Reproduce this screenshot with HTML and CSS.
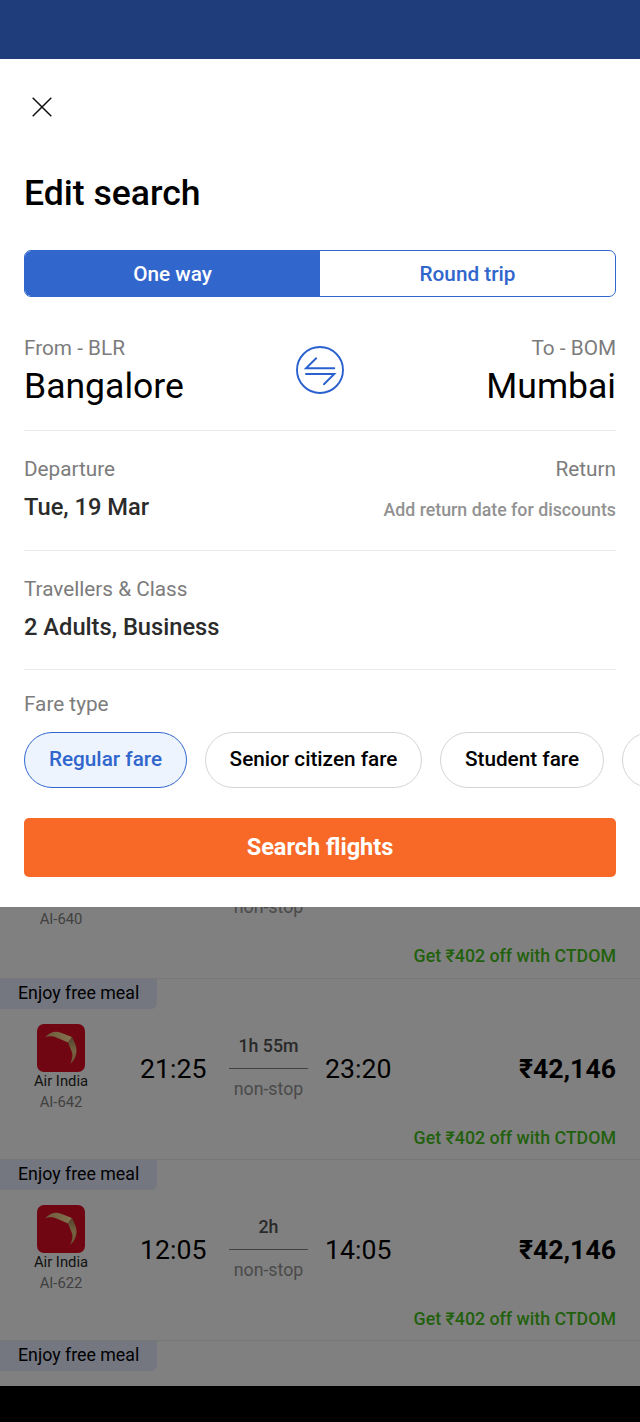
FILE: index.html
```
<!DOCTYPE html>
<html lang="en">
<head>
<meta charset="utf-8">
<title>Edit search</title>
<link rel="stylesheet" href="styles.css">
</head>
<body>
<svg class="defs" width="0" height="0" aria-hidden="true">
  <defs>
    <linearGradient id="tail" x1="0" y1="0" x2="0" y2="1"><stop offset="0" stop-color="#51422a"/><stop offset="0.5" stop-color="#756342"/><stop offset="1" stop-color="#6b5432"/></linearGradient>
    <linearGradient id="wing" x1="0" y1="0" x2="1" y2="0"><stop offset="0" stop-color="#6d5b3b"/><stop offset="1" stop-color="#847350"/></linearGradient>
    <symbol id="airline-logo" viewBox="0 0 48 48">
      <rect width="48" height="48" rx="7" fill="#710613"/>
      <path d="M8 13.500C13 8.300 18 6.500 24 8.800L35 13L31 18.500L20 13.800C15 11.500 11 12 8 13.500Z" fill="url(#wing)"/>
      <path d="M35 13C37.500 18 40 23 39.500 28C39 33 36.500 37 33.300 40C35.500 34 36 31 34.500 27L31 18.500Z" fill="url(#tail)"/>
    </symbol>
  </defs>
</svg>
<div class="status"></div>
<main class="sheet">
  <button class="close" aria-label="Close"><svg width="20" height="20" viewBox="0 0 20 20"><path d="M.7.7l18.600 18.600M19.300.7L.7 19.300" fill="none" stroke="#111" stroke-width="1.500"/></svg></button>
  <h1 class="title">Edit search</h1>
  <div class="tabs"><button class="tab tab-active">One way</button><button class="tab">Round trip</button></div>
  <section class="route">
    <div class="place"><span class="label">From - BLR</span><span class="city">Bangalore</span></div>
    <svg class="swap" width="48" height="48" viewBox="0 0 48 48" fill="none" stroke="#2a61cf" stroke-width="1.900" stroke-linecap="round"><circle cx="24" cy="24" r="23"/><path d="M38.300 22.300H10L20.200 12.300M10 28H38.300L27.900 38.200"/></svg>
    <div class="place end"><span class="label">To - BOM</span><span class="city">Mumbai</span></div>
  </section>
  <section class="field">
    <div><span class="label">Departure</span><span class="value">Tue, 19 Mar</span></div>
    <div class="end"><span class="label">Return</span><span class="hint">Add return date for discounts</span></div>
  </section>
  <section class="field">
    <div><span class="label">Travellers &amp; Class</span><span class="value">2 Adults, Business</span></div>
  </section>
  <section class="fares">
    <span class="label">Fare type</span>
    <div class="chips"><button class="chip chip-active">Regular fare</button><button class="chip chip-wide">Senior citizen fare</button><button class="chip chip-student">Student fare</button><button class="chip chip-next" aria-label="More fares"></button></div>
  </section>
  <button class="search">Search flights</button>
</main>
<div class="results">
  <article class="flight flight-first">
    <div class="details"><div class="airline"><span class="code">AI-640</span></div><div class="time"></div><div class="duration"><span>non-stop</span></div></div>
    <div class="offer">Get ₹402 off with CTDOM</div>
  </article>
  <article class="flight">
    <div class="tag">Enjoy free meal</div>
    <div class="details"><div class="airline"><svg class="logo"><use href="#airline-logo"/></svg><span class="name">Air India</span><span class="code">AI-642</span></div><div class="time">21:25</div><div class="duration"><b>1h 55m</b><span>non-stop</span></div><div class="time arrive">23:20</div><div class="price">₹42,146</div></div>
    <div class="offer">Get ₹402 off with CTDOM</div>
  </article>
  <article class="flight">
    <div class="tag">Enjoy free meal</div>
    <div class="details"><div class="airline"><svg class="logo"><use href="#airline-logo"/></svg><span class="name">Air India</span><span class="code">AI-622</span></div><div class="time">12:05</div><div class="duration"><b>2h</b><span>non-stop</span></div><div class="time arrive">14:05</div><div class="price">₹42,146</div></div>
    <div class="offer">Get ₹402 off with CTDOM</div>
  </article>
  <article class="flight flight-last"><div class="tag">Enjoy free meal</div></article>
</div>
<div class="navbar"></div>
</body>
</html>
```
FILE: styles.css
```
* { box-sizing: border-box; }
body { margin: 0; width: 640px; height: 1422px; overflow: hidden; display: flex; flex-direction: column; background: #000; font-family: Roboto, sans-serif; white-space: nowrap; }
button { font: inherit; margin: 0; padding: 0; border: 0; background: none; color: inherit; }
svg { display: block; flex: none; }
.defs { position: absolute; }
.status { height: 59px; background: #1f3d7a; flex: none; }
.sheet { height: 848px; background: #fff; padding: 0 24px; flex: none; overflow: hidden; }
.close { display: block; margin: 37.500px 0 0 7.500px; height: 20px; width: 20px; }
.title { margin: 55.500px 0 36px; font-size: 35.56px; line-height: 42px; font-weight: 500; color: #000; }
.tabs { display: flex; height: 47px; border: 1.5px solid #3166cd; border-radius: 7px; overflow: hidden; }
.tab { flex: 1; font-size: 20.740px; line-height: 44px; font-weight: 500; color: #3166cd; }
.tab-active { background: #3166cd; color: #fff; }
.label { display: block; font-size: 20.740px; line-height: 26px; color: #7c7c7c; }
.route { display: flex; justify-content: space-between; height: 134px; padding-top: 38px; border-bottom: 1.5px solid #e9e9e9; }
.place { width: 260px; }
.end { text-align: right; }
.city { display: block; font-size: 35.56px; line-height: 50px; color: #000; }
.swap { margin-top: 11px; }
.field { display: flex; justify-content: space-between; height: 119.500px; padding-top: 25px; border-bottom: 1.5px solid #e9e9e9; }
.value { display: block; margin-top: 10px; font-size: 23.700px; line-height: 30px; font-weight: 500; color: #2b2b2b; }
.hint { display: block; margin-top: 14px; font-size: 17.78px; line-height: 28px; font-weight: 500; color: #929292; }
.fares { padding-top: 21px; }
.chips { display: flex; gap: 18px; margin-top: 15px; width: 616px; overflow: hidden; }
.chip { flex: none; width: 163px; height: 56px; padding-bottom: 2px; border: 1.3px solid #d4d4d4; border-radius: 28px; font-size: 20.740px; font-weight: 500; color: #000; }
.chip-active { border-color: #3166cd; background: #edf4fd; color: #3166cd; }
.chip-wide { width: 217px; }
.chip-student { width: 164px; }
.search { display: block; width: 100%; height: 59px; margin-top: 30px; padding-bottom: 2px; border-radius: 5px; background: #f86928; color: #fff; font-size: 23.500px; font-weight: 700; }
.results { height: 479px; flex: none; overflow: hidden; display: flex; flex-direction: column; background: #808080; }
.flight { flex: none; height: 181px; border-top: 1.5px solid #777; }
.flight-first { height: 71px; border-top: 0; }
.flight-last { height: 46px; }
.tag { width: 157px; height: 30px; padding-left: 18px; line-height: 29px; font-size: 17.78px; background: #747780; border-bottom-right-radius: 6px; color: #000; }
.details { display: flex; height: 88px; margin-top: 15px; padding: 0 24px; align-items: flex-start; }
.airline { width: 74px; margin-right: 42px; display: flex; flex-direction: column; align-items: center; }
.logo { width: 48px; height: 48px; }
.name { font-size: 14.800px; line-height: 18px; color: #111; }
.code { margin-top: 1px; font-size: 14.800px; line-height: 23px; color: #404040; }
.time { width: 89px; font-size: 26.67px; line-height: 32px; margin-top: 29px; color: #000; }
.duration { width: 79px; margin: 9px 17px 0 0; text-align: center; font-size: 17.78px; line-height: 26px; }
.duration b { display: block; height: 36px; font-weight: 500; color: #2a2a2a; border-bottom: 1.5px solid #424242; }
.duration span { display: block; margin-top: 7px; color: #4a4a4a; }
.price { margin: 29px 0 0 auto; font-size: 26.67px; line-height: 32px; font-weight: 700; color: #000; }
.offer { margin-top: 13px; padding-right: 24px; text-align: right; font-size: 17.78px; line-height: 26px; font-weight: 500; color: #23600e; }
.flight-first .details { height: 27px; margin-top: 0; }
.flight-first .duration { margin-top: -13px; }
.flight-first .duration span { margin-top: 0; }
.flight-first .offer { margin-top: 9px; }
.navbar { height: 36px; flex: none; background: #000; }
```
